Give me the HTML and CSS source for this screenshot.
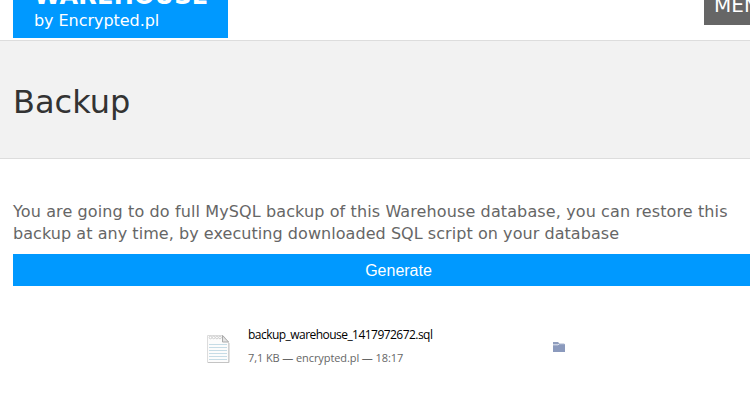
FILE: index.html
```html
<!DOCTYPE html>
<html lang="en">
<head>
<meta charset="utf-8">
<title>Backup</title>
<link rel="stylesheet" href="styles.css">
</head>
<body>
<header class="topbar">
  <div class="brand">
    <div class="brand-name">WAREHOUSE</div>
    <div class="brand-by">by Encrypted.pl</div>
  </div>
  <div class="menu">MENU</div>
</header>
<section class="heading"><h1>Backup</h1></section>
<main class="content">
  <p class="intro"><span class="line first">You are going to do full MySQL backup of this Warehouse database, you can restore this</span> <span class="line second">backup at any time, by executing downloaded SQL script on your database</span></p>
  <button class="generate">Generate</button>
  <div class="download">
    <svg class="doc" width="24" height="28" viewBox="0 0 24 28">
      <path d="M.5 .5H16L21.5 7V27.5H.5Z" fill="#fcfcfc" stroke="#dcdcdc"/>
      <path d="M22 8V27.5H1" fill="none" stroke="#c4c4c4"/>
      <path d="M2 9.5H20M2 12.5H20M2 15.5H20M2 18.5H20M2 21.5H20M2 24.5H20" stroke="#c6dce6"/>
      <path d="M15.5 .5V7H21.5Z" fill="#e4e4e4" stroke="#aaa"/>
      <g fill="#fff" stroke="#c4c4c4" stroke-width=".8"><circle cx="3.5" cy="2.5" r="1.3"/><circle cx="6.7" cy="2.5" r="1.3"/><circle cx="9.9" cy="2.5" r="1.3"/><circle cx="13" cy="2.5" r="1.3"/></g>
    </svg>
    <div class="info">
      <div class="file">backup_warehouse_1417972672.sql</div>
      <div class="meta">7,1 KB — encrypted.pl — 18:17</div>
    </div>
    <svg class="folder" width="12" height="10" viewBox="0 0 12 10">
      <path d="M0 0H5L6 1H11V3H0Z" fill="#8f9dbd"/>
      <path d="M0 3H5.5L7 2H12V10H0Z" fill="#8b9abd"/>
      <path d="M0 2.8H5L6.5 1.7H12" fill="none" stroke="#edf0f6" stroke-width=".9"/>
    </svg>
  </div>
</main>
</body>
</html>
```
FILE: styles.css
```css
* { box-sizing: border-box; }
body {
  margin: 0;
  height: 400px;
  overflow: hidden;
  background: #fff;
  color: #666;
  font-family: Verdana, "DejaVu Sans", sans-serif;
}
.topbar {
  display: flex;
  justify-content: space-between;
  align-items: flex-start;
  height: 41px;
  padding-left: 13px;
  border-bottom: 1px solid #ddd;
}
.brand {
  width: 215px;
  height: 38px;
  padding-left: 21px;
  background: #09f;
  color: #fff;
  white-space: nowrap;
}
.brand-name {
  margin-top: -18px;
  font-size: 24px;
  line-height: 29px;
  font-weight: bold;
  letter-spacing: .2px;
}
.brand-by { font-size: 16px; line-height: 20px; letter-spacing: -.05px; }
.menu {
  width: 46px;
  height: 25px;
  padding-left: 10px;
  overflow: hidden;
  background: #666;
  color: #fff;
  font-size: 20px;
  line-height: 10px;
}
.heading {
  height: 118px;
  padding: 40px 13px;
  background: #f2f2f2;
  border-bottom: 1px solid #ddd;
}
h1 {
  margin: 0;
  color: #333;
  font-size: 32px;
  font-weight: normal;
  line-height: 42px;
}
.content { padding: 42px 0 0 13px; }
.intro { margin: 0; font-size: 16px; line-height: 22px; }
.line { display: block; white-space: nowrap; }
.first { letter-spacing: .117px; }
.second { letter-spacing: .055px; }
.generate {
  display: block;
  width: 771px;
  height: 32px;
  margin-top: 9px;
  padding: 2px 0 0;
  border: 0;
  background: #09f;
  color: #fff;
  font: 16px "Liberation Sans", Arial, sans-serif;
}
.download {
  display: flex;
  align-items: flex-start;
  padding: 40px 0 0 194px;
}
.doc { margin-top: 9px; }
.info {
  width: 322px;
  padding-left: 17px;
  font-family: "Segoe UI", "Open Sans", sans-serif;
  white-space: nowrap;
}
.file { color: #000; font-size: 12px; line-height: 18px; letter-spacing: -.54px; }
.meta { margin-top: 6px; color: #666; font-size: 11px; line-height: 16px; letter-spacing: -.09px; }
.folder { margin-top: 16px; }
```
